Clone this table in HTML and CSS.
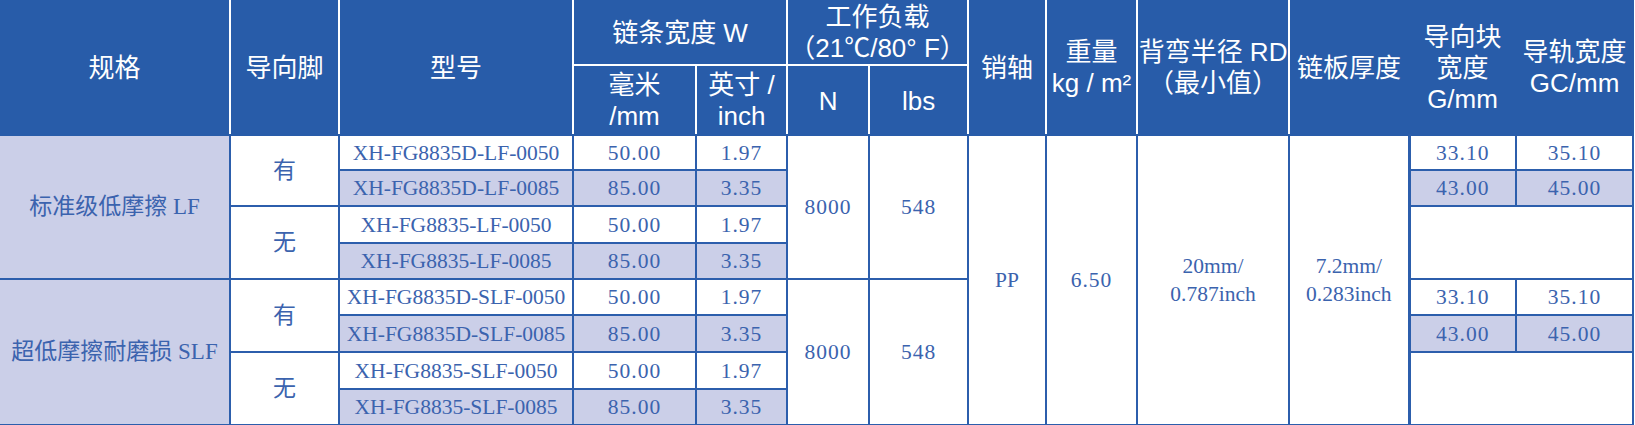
FILE: index.html
```html
<!DOCTYPE html>
<html lang="zh-CN">
<head>
<meta charset="utf-8">
<title>规格表</title>
<link rel="stylesheet" href="styles.css">
</head>
<body>
<table class="spec">
  <colgroup>
    <col class="c-spec"><col class="c-foot"><col class="c-model"><col class="c-mm"><col class="c-inch">
    <col class="c-n"><col class="c-lbs"><col class="c-pin"><col class="c-wt"><col class="c-rd">
    <col class="c-thk"><col class="c-g"><col class="c-gc">
  </colgroup>
  <thead>
    <tr class="h1">
      <th rowspan="2" class="first">规格</th>
      <th rowspan="2">导向脚</th>
      <th rowspan="2">型号</th>
      <th colspan="2" class="grp">链条宽度 W</th>
      <th colspan="2" class="grp">工作负载<br>（21℃/80° F）</th>
      <th rowspan="2">销轴</th>
      <th rowspan="2">重量<br>kg / m²</th>
      <th rowspan="2">背弯半径 RD<br>（最小值）</th>
      <th rowspan="2" class="nr">链板厚度</th>
      <th rowspan="2" class="nl nr">导向块<br>宽度<br>G/mm</th>
      <th rowspan="2" class="nl last">导轨宽度<br>GC/mm</th>
    </tr>
    <tr class="h2">
      <th>毫米<br>/mm</th>
      <th>英寸 /<br>inch</th>
      <th>N</th>
      <th>lbs</th>
    </tr>
  </thead>
  <tbody>
    <tr class="r1">
      <td rowspan="4" class="name">标准级低摩擦 LF</td>
      <td rowspan="2" class="cjk">有</td>
      <td>XH-FG8835D-LF-0050</td>
      <td class="num">50.00</td>
      <td class="num">1.97</td>
      <td rowspan="4" class="num">8000</td>
      <td rowspan="4" class="num">548</td>
      <td rowspan="8">PP</td>
      <td rowspan="8" class="num">6.50</td>
      <td rowspan="8" class="two">20mm/<br>0.787inch</td>
      <td rowspan="8" class="two">7.2mm/<br>0.283inch</td>
      <td class="gl num">33.10</td>
      <td class="num">35.10</td>
    </tr>
    <tr class="alt r2">
      <td>XH-FG8835D-LF-0085</td>
      <td class="num">85.00</td>
      <td class="num">3.35</td>
      <td class="gl num">43.00</td>
      <td class="num">45.00</td>
    </tr>
    <tr class="r3">
      <td rowspan="2" class="cjk">无</td>
      <td>XH-FG8835-LF-0050</td>
      <td class="num">50.00</td>
      <td class="num">1.97</td>
      <td colspan="2" rowspan="2" class="gl"></td>
    </tr>
    <tr class="alt r4">
      <td>XH-FG8835-LF-0085</td>
      <td class="num">85.00</td>
      <td class="num">3.35</td>
    </tr>
    <tr class="r5">
      <td rowspan="4" class="name">超低摩擦耐磨损 SLF</td>
      <td rowspan="2" class="cjk">有</td>
      <td>XH-FG8835D-SLF-0050</td>
      <td class="num">50.00</td>
      <td class="num">1.97</td>
      <td rowspan="4" class="num">8000</td>
      <td rowspan="4" class="num">548</td>
      <td class="gl num">33.10</td>
      <td class="num">35.10</td>
    </tr>
    <tr class="alt r6">
      <td>XH-FG8835D-SLF-0085</td>
      <td class="num">85.00</td>
      <td class="num">3.35</td>
      <td class="gl num">43.00</td>
      <td class="num">45.00</td>
    </tr>
    <tr class="r7">
      <td rowspan="2" class="cjk">无</td>
      <td>XH-FG8835-SLF-0050</td>
      <td class="num">50.00</td>
      <td class="num">1.97</td>
      <td colspan="2" rowspan="2" class="gl"></td>
    </tr>
    <tr class="alt r8">
      <td>XH-FG8835-SLF-0085</td>
      <td class="num">85.00</td>
      <td class="num">3.35</td>
    </tr>
  </tbody>
</table>
</body>
</html>
```

FILE: styles.css
```css
html, body {
  margin: 0;
  padding: 0;
  background: #ffffff;
}

.spec {
  border-collapse: collapse;
  table-layout: fixed;
  width: 1633px;
}

.c-spec { width: 230px; }
.c-foot { width: 109px; }
.c-model { width: 234px; }
.c-mm { width: 123px; }
.c-inch { width: 91px; }
.c-n { width: 82px; }
.c-lbs { width: 99px; }
.c-pin { width: 78px; }
.c-wt { width: 91px; }
.c-rd { width: 152px; }
.c-thk { width: 120px; }
.c-g { width: 107px; }
.c-gc { width: 117px; }

.spec thead th {
  background: #285ca9;
  color: #ffffff;
  font-family: "Liberation Sans", "Noto Sans CJK SC", sans-serif;
  font-weight: normal;
  font-size: 26px;
  line-height: 31px;
  padding: 2px 0 0 0;
  text-align: center;
  vertical-align: middle;
  border-top: 0;
  border-left: 2px solid #ffffff;
  border-right: 2px solid #ffffff;
  border-bottom: 2px solid #285ca9;
  white-space: nowrap;
}

.spec thead th.first { border-left: 0; }
.spec thead th.grp { border-bottom: 2px solid #ffffff; }
.spec thead th.nr { border-right-color: #285ca9; }
.spec thead th.nl { border-left-color: #285ca9; }
.spec thead th.last { border-right: 2px solid #285ca9; }

.spec .h1 { height: 63px; }
.spec .h2 { height: 70px; }

.spec tbody td {
  border: 2px solid #2c5eac;
  color: #3b63ae;
  font-family: "Liberation Serif", "Noto Sans CJK SC", serif;
  font-size: 21.5px;
  line-height: 28px;
  text-align: center;
  vertical-align: middle;
  padding: 0;
  background: #ffffff;
  white-space: nowrap;
}

.spec tbody tr.alt td { background: #cbcfe8; }

.spec tbody td.name {
  background: #cbcfe8;
  font-size: 23px;
  border-left: 0;
}

.spec tbody td.cjk { font-size: 23px; }
.spec tbody td.num { letter-spacing: 1px; }
.spec tbody td.gl { border-left-width: 3px; }

.spec .r1 { height: 35px; }
.spec .r2 { height: 36px; }
.spec .r3 { height: 37px; }
.spec .r4 { height: 36px; }
.spec .r5 { height: 36px; }
.spec .r6 { height: 37px; }
.spec .r7 { height: 37px; }
.spec .r8 { height: 36px; }
```
